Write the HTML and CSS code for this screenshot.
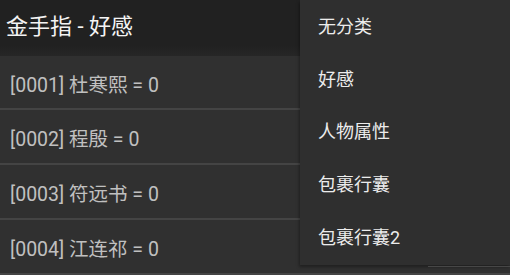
FILE: index.html
```html
<!DOCTYPE html>
<html>
<head>
<meta charset="utf-8">
<link rel="stylesheet" href="styles.css">
</head>
<body>
<div class="app">
  <header class="bar"><span class="title">金手指 - 好感</span></header>
  <ul class="list">
    <li class="row">[0001] 杜寒熙 = 0</li>
    <li class="row">[0002] 程殷 = 0</li>
    <li class="row">[0003] 符远书 = 0</li>
    <li class="row">[0004] 江连祁 = 0</li>
  </ul>
  <div class="menu">
    <div class="item">无分类</div>
    <div class="item">好感</div>
    <div class="item">人物属性</div>
    <div class="item">包裹行囊</div>
    <div class="item">包裹行囊2</div>
  </div>
  <div class="edge"></div>
</div>
</body>
</html>
```
FILE: styles.css
```css
* { box-sizing: border-box; }
html, body { margin: 0; padding: 0; background: #303030; }
body { font-family: Roboto, "Noto Sans CJK SC", sans-serif; }
.app { position: relative; width: 510px; height: 275px; overflow: hidden; background: #303030; }
.bar {
  height: 56px;
  background: linear-gradient(#212121 0, #212121 46px, #262626 56px);
  display: flex;
  align-items: center;
  padding: 0 0 8px 6px;
}
.title { color: #f4f4f4; font-size: 22px; }
.list { list-style: none; margin: 0; padding: 0; }
.row {
  height: 55px;
  display: flex;
  align-items: center;
  padding: 2px 0 0 10px;
  color: #c0c0c0;
  font-size: 19.5px;
  border-bottom: 2px solid #444444;
}
.row:first-child { height: 54px; }
.menu {
  position: absolute;
  top: 0;
  left: 300px;
  width: 210px;
  height: 265px;
  background: #2f2f2f;
  display: flex;
  flex-direction: column;
  box-shadow: -1px 2px 3px rgba(0,0,0,0.35);
}
.item {
  height: 52.6px;
  display: flex;
  align-items: center;
  padding: 0 0 2px 18px;
  color: #ececec;
  font-size: 18px;
}
.edge {
  position: absolute;
  top: 266px;
  left: 428px;
  width: 82px;
  height: 1px;
  background: #474747;
}
```
